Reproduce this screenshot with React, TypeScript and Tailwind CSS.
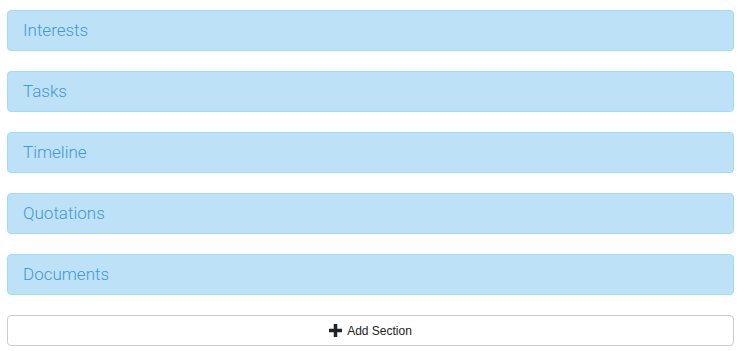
export default function App() {
  const sections = ["Interests", "Tasks", "Timeline", "Quotations", "Documents"];
  return (
    <div className="w-[740px] h-[351px] bg-white pt-[10px] pl-[7px] pr-[6px]" style={{ fontFamily: "Roboto, 'Liberation Sans', sans-serif" }}>
      <div className="flex flex-col gap-[20px]">
        {sections.map((s) => (
          <div key={s} className="h-[41px] rounded-[4px] border border-[#9fdff5] bg-[#bde2f7] flex items-center px-[15px]">
            <span className="text-[17px] font-light text-[#4397d2] leading-none">{s}</span>
          </div>
        ))}
      </div>
      <div className="mt-[20px] h-[31px] rounded-[4px] border border-[#cccccc] bg-white flex items-center justify-center gap-[5px]">
        <svg width="13" height="13" viewBox="0 0 13 13"><path d="M4.75 0h3.5v4.75H13v3.5H8.25V13h-3.5V8.25H0v-3.5h4.75z" fill="#222" /></svg>
        <span className="text-[12px] text-[#222] font-normal" style={{ fontFamily: "'Liberation Sans', Arial, sans-serif" }}>Add Section</span>
      </div>
    </div>
  );
}
